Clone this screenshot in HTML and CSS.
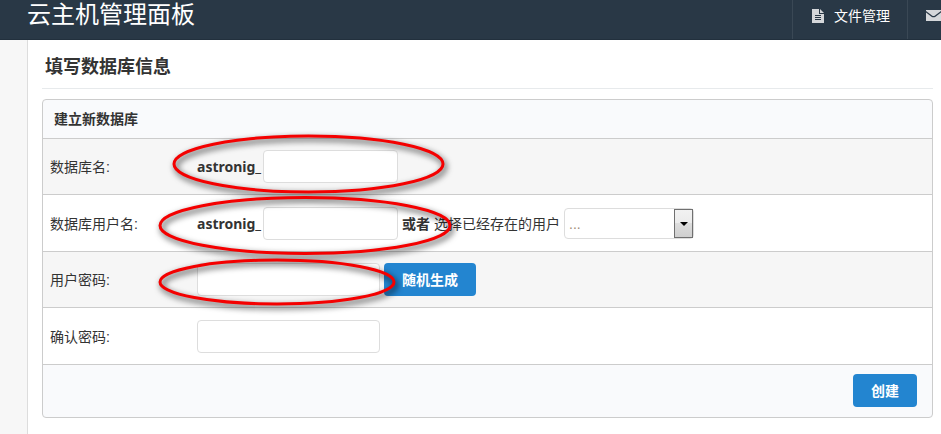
FILE: index.html
```html
<!DOCTYPE html>
<html lang="zh-CN">
<head>
    <meta charset="UTF-8">
    <meta name="viewport" content="width=device-width, initial-scale=1.0">
    <title>云主机管理面板</title>
    <link rel="stylesheet" href="styles.css">
</head>
<body>
    <header class="topbar">
        <div class="brand">云主机管理面板</div>
        <nav class="topnav">
            <a href="#" class="nav-item">
                <svg width="12" height="14" viewBox="0 0 12 14" aria-hidden="true">
                    <path fill="#d5d7da" fill-rule="evenodd" d="M0 0H7V5H12V14H0ZM8 0L12 4H8ZM3 6V7H9V6ZM3 8V9H9V8ZM3 10V11H9V10Z"/>
                </svg>
                <span>文件管理</span>
            </a>
            <a href="#" class="nav-item nav-mail" aria-label="邮件">
                <svg width="15" height="11" viewBox="0 0 15 11" aria-hidden="true">
                    <path fill="#d5d7da" d="M0 0H15V1L9 5.5Q7.5 6.5 6 5.5L0 1Z"/>
                    <path fill="#d5d7da" d="M0 2.5L5.5 6.7Q7.5 8 9.5 6.7L15 2.5V11H0Z"/>
                </svg>
            </a>
        </nav>
    </header>

    <div class="layout">
        <div class="sidebar"></div>
        <main class="content">
            <h1>填写数据库信息</h1>

            <form class="panel">
                <h2>建立新数据库</h2>
                <div class="row">
                    <label class="row-label" for="dbname">数据库名:</label>
                    <div class="field">
                        <b class="prefix">astronig_</b><input type="text" id="dbname" class="short">
                    </div>
                </div>
                <div class="row">
                    <label class="row-label" for="dbuser">数据库用户名:</label>
                    <div class="field">
                        <b class="prefix">astronig_</b><input type="text" id="dbuser" class="short">
                        <div class="existing">
                            <b>或者</b>
                            <label for="userlist">选择已经存在的用户</label>
                            <span class="select-box">
                                <select id="userlist">
                                    <option>...</option>
                                </select>
                            </span>
                        </div>
                    </div>
                </div>
                <div class="row">
                    <label class="row-label" for="passwd">用户密码:</label>
                    <div class="field">
                        <input type="password" id="passwd">
                        <button type="button" class="random">随机生成</button>
                    </div>
                </div>
                <div class="row">
                    <label class="row-label" for="passwd2">确认密码:</label>
                    <div class="field">
                        <input type="password" id="passwd2">
                    </div>
                </div>
                <div class="panel-footer">
                    <button type="submit">创建</button>
                </div>
            </form>
        </main>
    </div>

    <!-- 必填项的红圈标记 -->
    <svg class="marks" width="480" height="330" viewBox="0 0 480 330" aria-hidden="true">
        <ellipse cx="308.5" cy="164" rx="134.5" ry="28"/>
        <ellipse cx="305" cy="225.5" rx="145" ry="28"/>
        <ellipse cx="277" cy="282" rx="117" ry="22"/>
    </svg>
</body>
</html>
```

FILE: styles.css
```css
* {
    box-sizing: border-box;
}
body {
    margin: 0;
    min-height: 100vh;
    display: flex;
    flex-direction: column;
    background-color: #fff;
    color: #333;
    font-family: "Liberation Sans", "Noto Sans CJK SC", sans-serif;
    font-size: 14px;
    line-height: 20px;
}
.topbar {
    display: flex;
    justify-content: space-between;
    height: 40px;
    padding-left: 27px;
    background-color: #293846;
    border-bottom: 1px solid #22303d;
    color: #fff;
}
.brand {
    font-size: 24px;
    line-height: 30px;
}
.topnav {
    display: flex;
}
.nav-item {
    display: flex;
    align-items: center;
    gap: 10px;
    padding: 0 17px 8px 19px;
    border-left: 1px solid #3a4855;
    color: #fff;
    text-decoration: none;
}
.nav-mail {
    padding: 0 0 8px 18px;
}
.layout {
    display: flex;
    flex: 1;
}
.sidebar {
    width: 28px;
    background-color: #f7f7f7;
    border-right: 1px solid #ddd;
}
.content {
    flex: 1;
    padding: 0 8px 0 14px;
}
h1 {
    margin: 0 0 10px;
    padding: 15px 3px 9px;
    border-bottom: 1px solid #e7eaec;
    font-size: 18px;
    line-height: 24px;
}
.panel {
    border: 1px solid #ccc;
    border-radius: 4px;
    background-color: #f9fafc;
}
h2 {
    margin: 0;
    padding: 9px 11px;
    font-size: 14px;
    line-height: 20px;
}
.row {
    display: flex;
    align-items: center;
    padding: 11px 7px;
    border-top: 1px solid #ccc;
    background-color: #f6f6f6;
}
.row:nth-of-type(even) {
    padding-top: 12px;
    background-color: #fff;
}
.row-label {
    width: 147px;
}
.field {
    display: flex;
    align-items: center;
}
.prefix {
    width: 66px;
    font-family: "Noto Sans", "Liberation Sans", sans-serif;
}
input,
select {
    width: 183px;
    height: 33px;
    padding: 0 4px;
    border: 1px solid #ddd;
    border-radius: 4px;
    background-color: #fff;
    color: #555;
    font: inherit;
}
.short {
    width: 135px;
}
.existing {
    display: flex;
    align-items: center;
    gap: 4px;
    margin-left: 4px;
}
.select-box {
    position: relative;
    display: flex;
}
select {
    width: 130px;
    height: 31px;
    appearance: none;
    color: #a08c78;
}
/* 下拉按钮 */
.select-box::before {
    content: "";
    position: absolute;
    top: 1px;
    right: 1px;
    bottom: 1px;
    width: 17px;
    border: 1px solid #707070;
    background: linear-gradient(#f2f2f2, #ebebeb 50%, #ddd 50%, #cfcfcf);
    pointer-events: none;
}
.select-box::after {
    content: "";
    position: absolute;
    top: 14px;
    right: 6px;
    border: 4px solid transparent;
    border-top-color: #000;
    border-bottom: 0;
    pointer-events: none;
}
button {
    height: 33px;
    padding: 0 18px;
    border: 0;
    border-radius: 4px;
    background-color: #2385d0;
    color: #fff;
    font: inherit;
    font-weight: bold;
}
.random {
    margin-left: 4px;
}
.panel-footer {
    display: flex;
    justify-content: flex-end;
    padding: 9px 15px 10px;
    border-top: 1px solid #ccc;
}
.marks {
    position: absolute;
    top: 0;
    left: 0;
    pointer-events: none;
}
.marks ellipse {
    fill: none;
    stroke: #f40000;
    stroke-width: 3;
    filter: drop-shadow(2px 3px 3px rgba(0, 0, 0, 0.8));
}
```
